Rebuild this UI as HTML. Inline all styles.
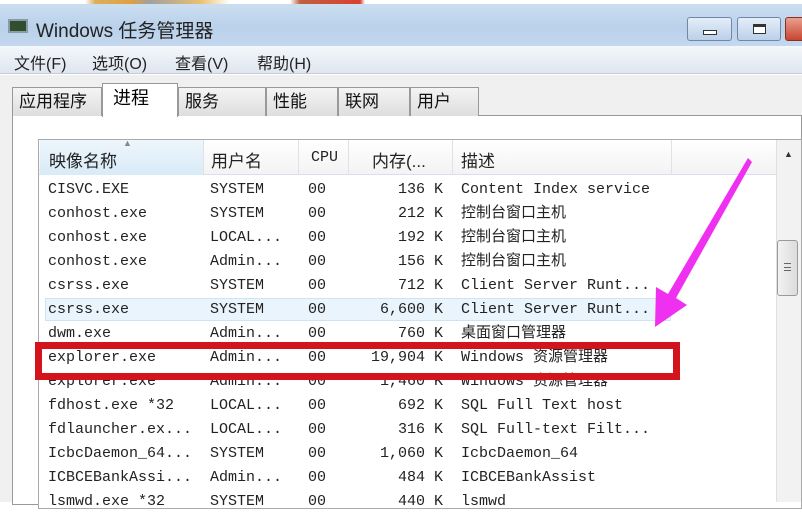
<!DOCTYPE html>
<html><head><meta charset="utf-8"><style>
*{margin:0;padding:0;box-sizing:border-box}
body{width:802px;height:502px;overflow:hidden;background:#fff;position:relative;font-family:"Liberation Sans","Noto Sans CJK SC",sans-serif}
.abs{position:absolute}
.title{left:0;top:0;width:802px;height:46px;background:linear-gradient(#cfe0f2,#b9d1ea 60%,#c4d8ee)}
.strip{left:0;top:0;width:802px;height:4px;background:linear-gradient(90deg,#fff 0,#fff 85px,#d9b060 95px,#e0a040 130px,#a0a0a0 150px,#e8c070 200px,#fff 230px,#fff 290px,#c06040 300px,#d84030 360px,#fff 365px)}
.menu{left:0;top:46px;width:802px;height:28px;background:linear-gradient(#f4f7fb,#dfe6ef);border-bottom:1px solid #c8ccd2;font-size:16px;color:#222}
.menu span{position:absolute;top:4px}
.bodybg{left:0;top:75px;width:802px;height:427px;background:#f0f0f0}
.tab{top:87px;height:29px;border:1px solid #999;border-bottom:none;background:linear-gradient(#f4f4f4,#dedede);font-size:17px;padding-left:6px;line-height:27px;color:#111}
.panel{left:12px;top:115px;width:790px;height:390px;background:#fff;border:1px solid #999}
.list{left:38px;top:139px;width:764px;height:370px;border:1px solid #aaa;background:#fff}
.hdr{left:39px;top:140px;width:737px;height:35px;background:linear-gradient(#fff,#f3f3f3);border-bottom:1px solid #dde}
.hdr span{position:absolute;top:7px;font-size:17px;color:#222}
.vd{position:absolute;top:0;width:1px;height:35px;background:#dfe3e8}
.row{position:absolute;left:0;width:802px;height:24px;font-family:"Liberation Mono","Noto Sans CJK SC",monospace;font-size:15px;color:#222;line-height:24px}
.row span{position:absolute;white-space:pre}
</style></head><body>
<div class="abs bodybg"></div>
<div class="abs title"></div>
<div class="abs strip"></div>
<div class="abs" style="left:8px;top:19px;width:20px;height:14px;background:#2f4f2f;border:2px solid #8a9aa8"></div>
<div class="abs" style="left:36px;top:16px;font-size:19px;color:#222">Windows 任务管理器</div>
<div class="abs" style="left:687px;top:17px;width:45px;height:24px;border:1px solid #6f87a8;border-radius:3px;background:linear-gradient(#e4eef9,#bcd0e8)"><div style="position:absolute;left:15px;top:12px;width:14px;height:5px;border:1px solid #333;background:#fff"></div></div>
<div class="abs" style="left:737px;top:17px;width:44px;height:24px;border:1px solid #6f87a8;border-radius:3px;background:linear-gradient(#e4eef9,#bcd0e8)"><div style="position:absolute;left:15px;top:6px;width:13px;height:10px;border:1px solid #333;border-top-width:3px;background:#fff"></div></div>
<div class="abs" style="left:785px;top:17px;width:20px;height:24px;border:1px solid #8a3020;border-radius:3px;background:linear-gradient(#e8a090,#c8452e)"></div>
<div class="abs menu"><span style="left:14px">文件(F)</span><span style="left:92px">选项(O)</span><span style="left:175px">查看(V)</span><span style="left:257px">帮助(H)</span></div>
<div class="abs panel"></div>
<div class="abs tab" style="left:12px;width:90px">应用程序</div>
<div class="abs tab" style="left:178px;width:88px">服务</div>
<div class="abs tab" style="left:266px;width:72px">性能</div>
<div class="abs tab" style="left:338px;width:72px">联网</div>
<div class="abs tab" style="left:410px;width:69px">用户</div>
<div class="abs" style="left:102px;top:83px;width:76px;height:34px;background:#fff;border:1px solid #999;border-bottom:none;font-size:18px;padding-left:10px;line-height:28px">进程</div>
<div class="abs list"></div>
<div class="abs hdr">
<div style="position:absolute;left:1px;top:0;width:163px;height:35px;background:linear-gradient(#eef6fc,#d8ebf7)"></div>
<div class="vd" style="left:164px"></div><div class="vd" style="left:259px"></div><div class="vd" style="left:309px"></div><div class="vd" style="left:413px"></div><div class="vd" style="left:632px"></div>
<span style="left:10px">映像名称</span><span style="left:84px;top:-2px;font-size:9px;color:#888">▲</span>
<span style="left:172px">用户名</span><span style="left:272px;font-family:'Liberation Mono',monospace;font-size:15px;top:9px">CPU</span><span style="left:333px">内存(...</span><span style="left:422px">描述</span>
</div>
<div class="abs" style="left:776px;top:140px;width:25px;height:362px;background:#f2f2f2;border-left:1px solid #e0e0e0"></div>
<div class="abs" style="left:784px;top:149px;font-size:9px;color:#333">▲</div>
<div class="abs" style="left:777px;top:240px;width:21px;height:56px;border:1px solid #999;border-radius:3px;background:linear-gradient(90deg,#f2f2f2,#dcdcdc)"><div style="position:absolute;left:6px;top:22px;width:7px;height:8px;border-top:1px solid #666;border-bottom:1px solid #666"></div><div style="position:absolute;left:6px;top:26px;width:7px;height:1px;background:#666"></div></div>
<div class="abs" style="left:45px;top:298px;width:626px;height:23px;background:#eaf4fc;border:1px solid #cde4f5"></div>
<div class="abs" style="left:0;top:178px">
<div class="row" style="top:0"><span style="left:48px">CISVC.EXE</span><span style="left:210px">SYSTEM</span><span style="left:308px">00</span><span style="left:371px">   136 K</span><span style="left:461px">Content Index service</span></div>
<div class="row" style="top:24px"><span style="left:48px">conhost.exe</span><span style="left:210px">SYSTEM</span><span style="left:308px">00</span><span style="left:371px">   212 K</span><span style="left:461px">控制台窗口主机</span></div>
<div class="row" style="top:48px"><span style="left:48px">conhost.exe</span><span style="left:210px">LOCAL...</span><span style="left:308px">00</span><span style="left:371px">   192 K</span><span style="left:461px">控制台窗口主机</span></div>
<div class="row" style="top:72px"><span style="left:48px">conhost.exe</span><span style="left:210px">Admin...</span><span style="left:308px">00</span><span style="left:371px">   156 K</span><span style="left:461px">控制台窗口主机</span></div>
<div class="row" style="top:96px"><span style="left:48px">csrss.exe</span><span style="left:210px">SYSTEM</span><span style="left:308px">00</span><span style="left:371px">   712 K</span><span style="left:461px">Client Server Runt...</span></div>
<div class="row" style="top:120px"><span style="left:48px">csrss.exe</span><span style="left:210px">SYSTEM</span><span style="left:308px">00</span><span style="left:371px"> 6,600 K</span><span style="left:461px">Client Server Runt...</span></div>
<div class="row" style="top:144px"><span style="left:48px">dwm.exe</span><span style="left:210px">Admin...</span><span style="left:308px">00</span><span style="left:371px">   760 K</span><span style="left:461px">桌面窗口管理器</span></div>
<div class="row" style="top:168px"><span style="left:48px">explorer.exe</span><span style="left:210px">Admin...</span><span style="left:308px">00</span><span style="left:371px">19,904 K</span><span style="left:461px">Windows 资源管理器</span></div>
<div class="row" style="top:192px"><span style="left:48px">explorer.exe</span><span style="left:210px">Admin...</span><span style="left:308px">00</span><span style="left:371px"> 1,460 K</span><span style="left:461px">Windows 资源管理器</span></div>
<div class="row" style="top:216px"><span style="left:48px">fdhost.exe *32</span><span style="left:210px">LOCAL...</span><span style="left:308px">00</span><span style="left:371px">   692 K</span><span style="left:461px">SQL Full Text host</span></div>
<div class="row" style="top:240px"><span style="left:48px">fdlauncher.ex...</span><span style="left:210px">LOCAL...</span><span style="left:308px">00</span><span style="left:371px">   316 K</span><span style="left:461px">SQL Full-text Filt...</span></div>
<div class="row" style="top:264px"><span style="left:48px">IcbcDaemon_64...</span><span style="left:210px">SYSTEM</span><span style="left:308px">00</span><span style="left:371px"> 1,060 K</span><span style="left:461px">IcbcDaemon_64</span></div>
<div class="row" style="top:288px"><span style="left:48px">ICBCEBankAssi...</span><span style="left:210px">Admin...</span><span style="left:308px">00</span><span style="left:371px">   484 K</span><span style="left:461px">ICBCEBankAssist</span></div>
<div class="row" style="top:312px"><span style="left:48px">lsmwd.exe *32</span><span style="left:210px">SYSTEM</span><span style="left:308px">00</span><span style="left:371px">   440 K</span><span style="left:461px">lsmwd</span></div>
</div>
<div class="abs" style="left:35px;top:342px;width:645px;height:38px;border:7px solid #d4141c"></div>
<svg class="abs" style="left:0;top:0" width="802" height="502"><polygon points="748,158 752,162 676,298 687,305 655,327 656,287 668,294" fill="#f030f0"/></svg>
</body></html>
